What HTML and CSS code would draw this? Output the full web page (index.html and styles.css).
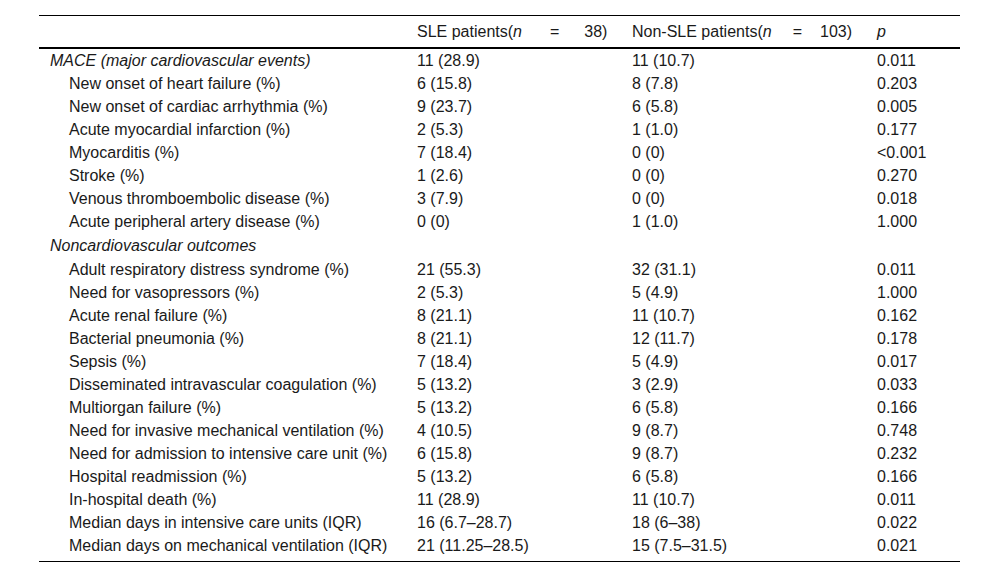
FILE: index.html
```html
<!DOCTYPE html>
<html>
<head>
<meta charset="utf-8">
<link rel="stylesheet" href="styles.css">
</head>
<body>
<div class="wrap">
<table class="tbl">
  <colgroup>
    <col class="c1"><col class="c2"><col class="c3"><col class="c4">
  </colgroup>
  <thead>
    <tr>
      <th></th>
      <th>SLE patients(<i>n</i><span class="eq eq-sle">=</span>38)</th>
      <th>Non-SLE patients(<i>n</i><span class="eq">=</span>103)</th>
      <th><i>p</i></th>
    </tr>
  </thead>
  <tbody>
    <tr class="grp"><td><i>MACE (major cardiovascular events)</i></td><td>11 (28.9)</td><td>11 (10.7)</td><td>0.011</td></tr>
    <tr><td class="ind">New onset of heart failure (%)</td><td>6 (15.8)</td><td>8 (7.8)</td><td>0.203</td></tr>
    <tr><td class="ind">New onset of cardiac arrhythmia (%)</td><td>9 (23.7)</td><td>6 (5.8)</td><td>0.005</td></tr>
    <tr><td class="ind">Acute myocardial infarction (%)</td><td>2 (5.3)</td><td>1 (1.0)</td><td>0.177</td></tr>
    <tr><td class="ind">Myocarditis (%)</td><td>7 (18.4)</td><td>0 (0)</td><td>&lt;0.001</td></tr>
    <tr><td class="ind">Stroke (%)</td><td>1 (2.6)</td><td>0 (0)</td><td>0.270</td></tr>
    <tr><td class="ind">Venous thromboembolic disease (%)</td><td>3 (7.9)</td><td>0 (0)</td><td>0.018</td></tr>
    <tr><td class="ind">Acute peripheral artery disease (%)</td><td>0 (0)</td><td>1 (1.0)</td><td>1.000</td></tr>
    <tr class="grp grp2"><td><i>Noncardiovascular outcomes</i></td><td></td><td></td><td></td></tr>
    <tr><td class="ind">Adult respiratory distress syndrome (%)</td><td>21 (55.3)</td><td>32 (31.1)</td><td>0.011</td></tr>
    <tr><td class="ind">Need for vasopressors (%)</td><td>2 (5.3)</td><td>5 (4.9)</td><td>1.000</td></tr>
    <tr><td class="ind">Acute renal failure (%)</td><td>8 (21.1)</td><td>11 (10.7)</td><td>0.162</td></tr>
    <tr><td class="ind">Bacterial pneumonia (%)</td><td>8 (21.1)</td><td>12 (11.7)</td><td>0.178</td></tr>
    <tr><td class="ind">Sepsis (%)</td><td>7 (18.4)</td><td>5 (4.9)</td><td>0.017</td></tr>
    <tr><td class="ind">Disseminated intravascular coagulation (%)</td><td>5 (13.2)</td><td>3 (2.9)</td><td>0.033</td></tr>
    <tr><td class="ind">Multiorgan failure (%)</td><td>5 (13.2)</td><td>6 (5.8)</td><td>0.166</td></tr>
    <tr><td class="ind">Need for invasive mechanical ventilation (%)</td><td>4 (10.5)</td><td>9 (8.7)</td><td>0.748</td></tr>
    <tr><td class="ind">Need for admission to intensive care unit (%)</td><td>6 (15.8)</td><td>9 (8.7)</td><td>0.232</td></tr>
    <tr><td class="ind">Hospital readmission (%)</td><td>5 (13.2)</td><td>6 (5.8)</td><td>0.166</td></tr>
    <tr><td class="ind">In-hospital death (%)</td><td>11 (28.9)</td><td>11 (10.7)</td><td>0.011</td></tr>
    <tr><td class="ind">Median days in intensive care units (IQR)</td><td>16 (6.7–28.7)</td><td>18 (6–38)</td><td>0.022</td></tr>
    <tr class="last"><td class="ind">Median days on mechanical ventilation (IQR)</td><td>21 (11.25–28.5)</td><td>15 (7.5–31.5)</td><td>0.021</td></tr>
  </tbody>
</table>
</div>
</body>
</html>
```

FILE: styles.css
```css
html, body {
  margin: 0;
  padding: 0;
  background: #fff;
}
.wrap {
  padding: 15px 40px 0 39px;
}
.tbl {
  width: 921px;
  border-collapse: collapse;
  table-layout: fixed;
  font-family: "Liberation Sans", Arial, sans-serif;
  font-size: 16px;
  color: #1a1a1a;
  border-top: 1px solid #000;
  border-bottom: 1px solid #000;
}
.c1 { width: 367px; }
.c2 { width: 215px; }
.c3 { width: 245px; }
.c4 { width: 94px; }
.tbl th {
  font-weight: normal;
  text-align: left;
  height: 31px;
  padding: 0 11px;
  border-bottom: 2px solid #000;
  white-space: nowrap;
  vertical-align: middle;
}
.eq {
  display: inline-block;
  margin: 0 18px 0 21px;
}
.eq-sle {
  margin: 0 25px 0 28px;
}
.tbl td {
  height: 23px;
  padding: 0 11px;
  white-space: nowrap;
  vertical-align: middle;
  line-height: 18px;
}
.tbl tr.grp2 td {
  height: 25px;
}
.tbl td.ind {
  padding-left: 30px;
}
.tbl tr.last td {
  padding-bottom: 4px;
}
```
